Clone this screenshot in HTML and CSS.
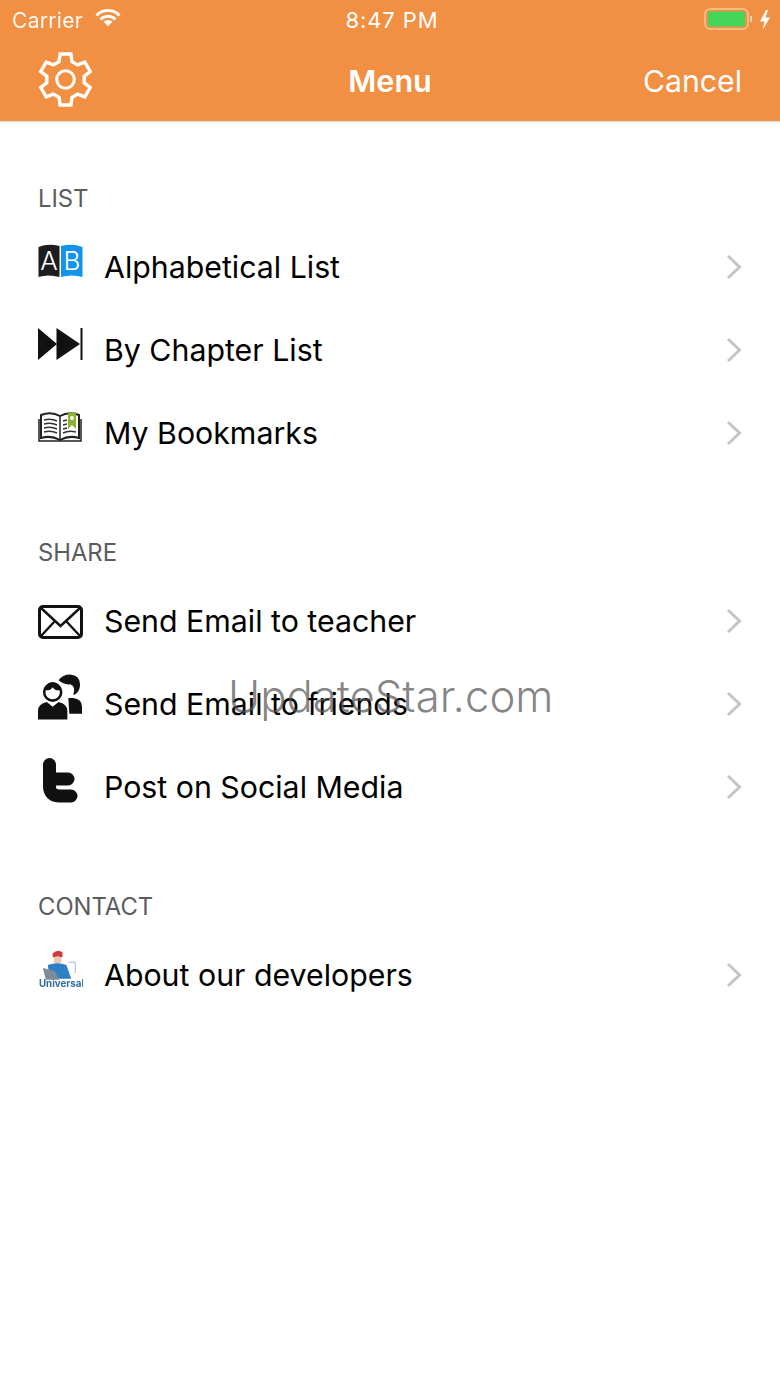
FILE: index.html
```html
<!DOCTYPE html>
<html lang="en">
<head>
    <meta charset="UTF-8">
    <meta name="viewport" content="width=device-width, initial-scale=1.0">
    <title>Menu</title>
    <link rel="stylesheet" href="styles.css">
</head>
<body>
    <svg class="defs" width="0" height="0">
        <symbol id="chevron" viewBox="0 0 16 26">
            <polyline points="2,2 13.5,13 2,24" fill="none" stroke="#c5c5c9" stroke-width="3"/>
        </symbol>
    </svg>

    <header class="top">
        <div class="status-bar">
            <div class="status-left">
                <span>Carrier</span>
                <svg class="wifi" width="26" height="20" viewBox="0 0 26 20">
                    <path d="M1.5 7.5 A16 16 0 0 1 24.5 7.5" fill="none" stroke="#fff" stroke-width="3"/>
                    <path d="M5.5 11.5 A10.5 10.5 0 0 1 20.5 11.5" fill="none" stroke="#fff" stroke-width="3"/>
                    <path d="M13 18.5 L8.6 13.8 A6 6 0 0 1 17.4 13.8 Z" fill="#fff"/>
                </svg>
            </div>
            <div class="status-time">8:47 PM</div>
            <div class="status-right">
                <svg width="66" height="28" viewBox="0 0 66 28">
                    <rect x="1" y="3" width="43" height="20" rx="5" fill="none" stroke="#f8c79b" stroke-width="1.5"/>
                    <rect x="4" y="5.5" width="37" height="15" rx="2" fill="#45d558"/>
                    <rect x="46" y="10" width="2" height="6" fill="#f8c79b"/>
                    <polygon points="62,4 56,15.5 60.5,15.5 58.5,24 66,11.5 61.5,11.5 64,4" fill="#fff"/>
                </svg>
            </div>
        </div>
        <div class="nav-bar">
            <div class="nav-left">
                <svg width="55" height="55" viewBox="-27.5 -27.5 55 55">
                    <path fill="none" stroke="#fff" stroke-width="3.4" stroke-linejoin="miter" d="M-6.5 -17.85 L-5.4 -25.43 L5.4 -25.43 L6.5 -17.85 L12.21 -14.55 L19.32 -17.4 L24.73 -8.03 L18.71 -3.3 L18.71 3.3 L24.73 8.03 L19.32 17.4 L12.21 14.55 L6.5 17.85 L5.4 25.43 L-5.4 25.43 L-6.5 17.85 L-12.21 14.55 L-19.32 17.4 L-24.73 8.03 L-18.71 3.3 L-18.71 -3.3 L-24.73 -8.03 L-19.32 -17.4 L-12.21 -14.55 Z"/>
                    <circle cx="0" cy="0" r="8.8" fill="none" stroke="#fff" stroke-width="3"/>
                </svg>
            </div>
            <div class="nav-title">Menu</div>
            <div class="nav-right">Cancel</div>
        </div>
    </header>

    <main>
        <h2 class="section-title">LIST</h2>
        <div class="row">
            <div class="row-icon">
                <svg width="45" height="34" viewBox="0 0 45 34">
                    <path d="M0.5 3 Q10 -1 21.5 2 V33 Q10 30 0.5 33 Z" fill="#1d1d1f"/>
                    <path d="M23 2 Q34 -1 44.5 3 V33 Q34 30 23 33 Z" fill="#1493ea"/>
                    <text x="11" y="26" class="book-letter">A</text>
                    <text x="34" y="26" class="book-letter">B</text>
                </svg>
            </div>
            <span class="row-label">Alphabetical List</span>
            <svg class="chevron" width="16" height="26"><use href="#chevron"/></svg>
        </div>
        <div class="row">
            <div class="row-icon">
                <svg width="45" height="32" viewBox="0 0 45 32">
                    <polygon points="0,0 19,16 0,32" fill="#111"/>
                    <polygon points="18.5,0 42,16 18.5,32" fill="#111"/>
                    <rect x="42.5" y="0" width="2" height="32" fill="#111"/>
                </svg>
            </div>
            <span class="row-label">By Chapter List</span>
            <svg class="chevron" width="16" height="26"><use href="#chevron"/></svg>
        </div>
        <div class="row">
            <div class="row-icon">
                <svg width="45" height="32" viewBox="0 0 45 32">
                    <path d="M3 4 Q13 0 22 5 Q31 0 41 4 V27 Q31 24 22 29 Q13 24 3 27 Z" fill="#fff" stroke="#222" stroke-width="2"/>
                    <path d="M1 8 V30 H43 V8" fill="none" stroke="#222" stroke-width="1.5"/>
                    <path d="M22 5 V29" stroke="#222" stroke-width="1.5"/>
                    <path d="M6 9 Q13 7 19 10 M6 13 Q13 11 19 14 M6 17 Q13 15 19 18 M6 21 Q13 19 19 22 M25 10 L29 9 M25 14 L29 13 M25 18 L29 17 M25 22 Q31 19 38 21" fill="none" stroke="#333" stroke-width="1.5"/>
                    <polygon points="30,2 38,1 38,18 34,14 30,18" fill="#8cb231"/>
                    <circle cx="34" cy="7" r="2" fill="#fff"/>
                </svg>
            </div>
            <span class="row-label">My Bookmarks</span>
            <svg class="chevron" width="16" height="26"><use href="#chevron"/></svg>
        </div>

        <h2 class="section-title">SHARE</h2>
        <div class="row">
            <div class="row-icon row-icon-mail">
                <svg width="45" height="34" viewBox="0 0 45 34">
                    <rect x="1.5" y="1.5" width="42" height="31" rx="3.5" fill="none" stroke="#111" stroke-width="3"/>
                    <path d="M3 3 L22.5 21 L42 3 M3 31 L17 16 M42 31 L28 16" fill="none" stroke="#111" stroke-width="2.4"/>
                </svg>
            </div>
            <span class="row-label">Send Email to teacher</span>
            <svg class="chevron" width="16" height="26"><use href="#chevron"/></svg>
        </div>
        <div class="row">
            <div class="row-icon row-icon-people">
                <svg width="46" height="46" viewBox="0 0 46 46">
                    <path d="M31 24 H36 Q45 25 45 33 V40 H32 Z" fill="#111"/>
                    <path d="M21 6 Q25 0 33 0 Q43 1 43 10 Q43 19 36 21 Q39 12 33 10 Q27 11 21 6 Z" fill="#111"/>
                    <path d="M0 46 V37 Q0 30 9 28 L15 33 L21 28 Q30 30 30 37 V46 Z" fill="#111"/>
                    <circle cx="15" cy="18" r="8.7" fill="#fff" stroke="#111" stroke-width="2.6"/>
                    <path d="M7 16 Q8 8 15 8 Q22 8 23 16 Q17 17 15 13 Q13 17 7 16 Z" fill="#111"/>
                </svg>
            </div>
            <span class="row-label">Send Email to friends</span>
            <svg class="chevron" width="16" height="26"><use href="#chevron"/></svg>
        </div>
        <div class="row">
            <div class="row-icon">
                <svg width="45" height="46" viewBox="0 0 45 46">
                    <path d="M11.5 6.5 V28 Q11.5 38 22 38 H33 M11.5 21 H30" fill="none" stroke="#111" stroke-width="13" stroke-linecap="round"/>
                </svg>
            </div>
            <span class="row-label">Post on Social Media</span>
            <svg class="chevron" width="16" height="26"><use href="#chevron"/></svg>
        </div>

        <h2 class="section-title">CONTACT</h2>
        <div class="row">
            <div class="row-icon">
                <svg class="logo" width="46" height="40" viewBox="0 0 46 40">
                    <path d="M15 4 Q20 -1 25 3 V8 H15 Z" fill="#cf3a3a"/>
                    <circle cx="20" cy="11" r="4" fill="#e8c8b0"/>
                    <path d="M10 16 Q20 12 29 16 L34 30 H12 Z" fill="#2f7fc4"/>
                    <path d="M5 19 L17 22 L22 31 H8 Z" fill="#7d8c99"/>
                    <path d="M31 13 H38 V24" fill="none" stroke="#9db4c6" stroke-width="1"/>
                    <text x="1" y="38" class="logo-text">Universal</text>
                </svg>
            </div>
            <span class="row-label">About our developers</span>
            <svg class="chevron" width="16" height="26"><use href="#chevron"/></svg>
        </div>
    </main>

    <div class="watermark">UpdateStar.com</div>
</body>
</html>
```

FILE: styles.css
```css
body {
    font-family: Inter, "Liberation Sans", sans-serif;
    margin: 0;
    padding: 0;
    background-color: #fff;
    color: #000;
    height: 1387px;
    overflow: hidden;
    position: relative;
}
.defs {
    display: block;
    height: 0;
}
.top {
    background-color: #f19042;
    color: #fff;
    height: 121px;
    box-shadow: 0 1px 1px #ddd;
}
.status-bar {
    display: grid;
    grid-template-columns: 1fr auto 1fr;
    align-items: center;
    height: 40px;
    padding: 0 10px 0 12px;
    font-size: 21px;
    letter-spacing: 0.3px;
}
.status-left {
    display: flex;
    align-items: center;
    gap: 12px;
    opacity: 0.95;
}
.wifi {
    margin-top: -5px;
}
.status-time {
    margin-left: 2px;
    font-size: 22px;
    letter-spacing: 0.9px;
}
.status-right {
    display: flex;
    justify-content: flex-end;
}
.nav-bar {
    display: grid;
    grid-template-columns: 1fr auto 1fr;
    align-items: center;
    height: 81px;
    padding: 0 38px;
}
.nav-left {
    display: flex;
    margin-top: -2px;
}
.nav-title {
    font-size: 30.5px;
    font-weight: 600;
}
.nav-right {
    font-size: 30.2px;
    text-align: right;
}
.section-title {
    margin: 0;
    padding: 67px 38px 16px;
    height: 22px;
    line-height: 22px;
    font-size: 23.8px;
    font-weight: 400;
    color: #5c5c60;
}
.row {
    display: flex;
    align-items: center;
    box-sizing: border-box;
    height: 83px;
    padding: 0 38px 2px;
}
.row-icon {
    display: flex;
    justify-content: flex-start;
    width: 45px;
    margin: 0 21px 12px 0;
}
.row-icon-mail {
    margin-bottom: -2px;
}
.row-icon-people {
    margin-bottom: 14px;
}
.row-label {
    flex: 1;
    font-size: 30.3px;
}
.chevron {
    display: block;
}
.book-letter {
    font-size: 26px;
    font-weight: 300;
    fill: #fff;
    text-anchor: middle;
}
.logo {
    filter: blur(0.7px);
}
.logo-text {
    font-size: 10px;
    font-weight: 700;
    fill: #2f6e9e;
}
.watermark {
    position: absolute;
    left: 228px;
    top: 670px;
    font-size: 43.7px;
    font-weight: 300;
    line-height: 54px;
    color: rgba(80, 80, 80, 0.7);
}
```
